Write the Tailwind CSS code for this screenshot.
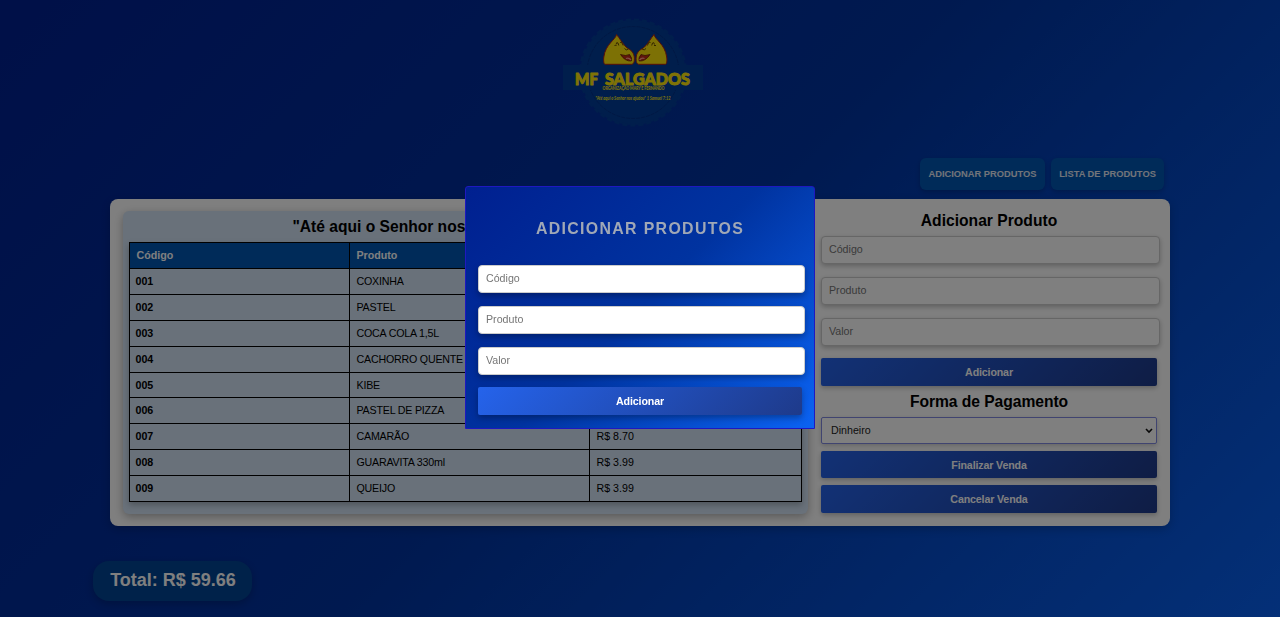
<!DOCTYPE html>
<html lang="pt-BR">
<head>
<meta charset="utf-8">
<title>MF Salgados</title>
<script src="https://cdn.jsdelivr.net/npm/@tailwindcss/browser@4"></script>
</head>
<body class="h-[617px] overflow-hidden font-['Liberation_Sans',Arial,sans-serif] text-[10.67px] text-black">
<div class="flex h-[617px] flex-col bg-[linear-gradient(135deg,#002090_0%,#0033a0_50%,#0860f0_100%)]">
  <header class="flex h-[158px] justify-center pt-[17px] pr-[14px]">
    <svg class="h-[112px] w-[142px]" viewBox="0 0 142 112">
      <g fill="#003c98">
        <circle cx="71" cy="55.500" r="52.500" stroke="#003c98" stroke-width="3" stroke-dasharray="5 3"/>
        <rect x="1" y="48" width="140" height="25"/>
      </g>
      <circle cx="71" cy="55.500" r="46" fill="none" stroke="#003088" stroke-width="1" stroke-dasharray="4 1"/>
      <rect x="5" y="48" width="132" height="25" fill="#003c98"/>
      <g id="salgado">
        <path d="M54.500 17.500C53.500 23 43.500 27 41.800 40C41.400 43 41.600 47.300 43 47.300H69.500C71.500 47.300 72.800 45 72.300 40C71.500 33.500 67 32.500 64 30C60 26 57.500 21 54.500 17.500Z" fill="#fbe30b" stroke="#b01e10" stroke-width="1"/>
        <path d="M54 27.500q.5-3 2-1.500l.8 2.500M58 25.500q1.500-1.500 2.500 1.500l.6 1.500M62.500 31.500q1.500 2.500 4 .5M52.500 29q1-2 2 0" fill="none" stroke="#5a3c00" stroke-width=".9"/>
        <path d="M58.500 37.500Q64 39.500 67.500 37.500Q70.500 41 69.300 44Q63 44.500 58.500 37.500Z" fill="#c02c18" stroke="#5a1000" stroke-width=".7"/>
        <path d="M64 41.500q3-1 5 1.500" stroke="#ff9c8a" stroke-width="1.300" fill="none"/>
      </g>
      <use href="#salgado" transform="translate(146.500 0) scale(-1 1)"/>
      <g fill="#ffe60c" font-family="Lato, sans-serif">
        <g font-size="16.500" font-weight="900" stroke="#ffe60c" stroke-width="1" stroke-linejoin="round">
          <text x="13" y="67.500" textLength="23" lengthAdjust="spacingAndGlyphs">MF</text>
          <text x="43" y="67.500" textLength="85" lengthAdjust="spacingAndGlyphs">SALGADOS</text>
        </g>
        <text x="40.500" y="73.200" font-size="4.800" font-weight="900" textLength="62" lengthAdjust="spacingAndGlyphs">ORGANIZAÇÃO MARY E FERNANDO</text>
        <text x="33.500" y="82.500" font-size="4.800" font-weight="700" font-style="italic" textLength="75" lengthAdjust="spacingAndGlyphs">"Até aqui o Senhor nos ajudou" 1 Samuel 7:12</text>
      </g>
    </svg>
  </header>

  <nav class="mr-[116px] flex h-[41px] justify-end gap-[6px] text-[9.33px] font-bold text-[#e4e9f4]">
    <div class="flex h-8 w-[125px] items-center justify-center rounded-md bg-[#0056b3] pt-px shadow-[0_2px_5px_rgba(0,0,0,.2)]">ADICIONAR PRODUTOS</div>
    <div class="flex h-8 w-[113px] items-center justify-center rounded-md bg-[#0056b3] pt-px shadow-[0_2px_5px_rgba(0,0,0,.2)]">LISTA DE PRODUTOS</div>
  </nav>

  <main class="mx-[110px] flex h-[327px] rounded-lg bg-white pt-3 pl-[13px] shadow-[0_3px_10px_rgba(0,0,0,.2)]">
    <section class="h-[303px] w-[685px] rounded-md bg-[#d2e2f4] px-[6px] shadow-[0_3px_10px_rgba(0,0,0,.3)]">
      <h2 class="h-[31px] pr-[2px] text-center text-[15.600px] leading-[31px] font-bold">"Até aqui o Senhor nos ajudou" 1 Samuel 7:12</h2>
      <table class="w-[673px] table-fixed border-collapse text-left shadow-[0_3px_6px_rgba(0,0,0,.25)] [&_td]:h-[26px] [&_td]:border [&_td]:border-black [&_td]:p-0 [&_td]:pl-[6.500px] [&_td]:leading-[13px] [&_th]:h-[26px] [&_th]:border [&_th]:border-black [&_th]:p-0 [&_th]:pb-px [&_th]:pl-[6.500px] [&_th]:leading-[13px]">
        <colgroup><col class="w-[220px]"><col class="w-[240px]"><col></colgroup>
        <thead><tr class="bg-[#0056b3] text-white"><th>Código</th><th>Produto</th><th>Valor</th></tr></thead>
        <tbody class="[&_td:first-child]:pl-[5.500px] [&_td:first-child]:font-bold [&_td:nth-child(2)]:tracking-[-0.200px]">
          <tr><td>001</td><td>COXINHA</td><td>R$ 6.00</td></tr>
          <tr><td>002</td><td>PASTEL</td><td>R$ 7.00</td></tr>
          <tr><td>003</td><td>COCA COLA 1,5L</td><td>R$ 9.99</td></tr>
          <tr><td>004</td><td>CACHORRO QUENTE</td><td>R$ 6.00</td></tr>
          <tr class="[&_td]:h-[25px]!"><td>005</td><td>KIBE</td><td>R$ 6.00</td></tr>
          <tr><td>006</td><td>PASTEL DE PIZZA</td><td>R$ 7.99</td></tr>
          <tr><td>007</td><td>CAMARÃO</td><td>R$ 8.70</td></tr>
          <tr><td>008</td><td>GUARAVITA 330ml</td><td>R$ 3.99</td></tr>
          <tr><td>009</td><td>QUEIJO</td><td>R$ 3.99</td></tr>
        </tbody>
      </table>
    </section>
    <section class="ml-[13px] flex w-[339px] flex-col">
      <h2 class="mr-[3px] h-[25px] text-center text-[15.650px] leading-[19px] font-bold">Adicionar Produto</h2>
      <div class="flex flex-col gap-[13px] [&>div]:pb-[2px]">
        <div class="flex h-7 items-center rounded border border-[#ccc] bg-white pl-[7px] text-[#757575] shadow-[0_2px_5px_rgba(0,0,0,.25)]">Código</div>
        <div class="flex h-7 items-center rounded border border-[#ccc] bg-white pl-[7px] text-[#757575] shadow-[0_2px_5px_rgba(0,0,0,.25)]">Produto</div>
        <div class="flex h-7 items-center rounded border border-[#ccc] bg-white pl-[7px] text-[#757575] shadow-[0_2px_5px_rgba(0,0,0,.25)]">Valor</div>
      </div>
      <button class="mt-3 h-7 w-[336px] shrink-0 rounded-xs bg-[linear-gradient(135deg,#2563eb,#1e3a8a)] font-bold tracking-[-0.150px] text-white shadow-[0_2px_5px_rgba(0,0,0,.25)]">Adicionar</button>
      <h2 class="mr-[3px] h-[31px] text-center text-[15.650px] leading-[31px] font-bold tracking-[-0.050px]">Forma de Pagamento</h2>
      <div class="flex h-[27px] w-[336px] items-center justify-between rounded-xs border border-[#8088e0] bg-white pr-[3px] pl-[9px] text-[#222] shadow-[0_2px_5px_rgba(0,0,0,.2)]">
        <span class="pb-px">Dinheiro</span>
        <svg class="h-[6px] w-2" viewBox="0 0 8 6"><path d="M1 1l3 3 3-3" fill="none" stroke="#111" stroke-width="1.600"/></svg>
      </div>
      <button class="mt-[7px] h-[27px] w-[336px] shrink-0 rounded-xs bg-[linear-gradient(135deg,#2563eb,#1e3a8a)] font-bold tracking-[-0.150px] text-white shadow-[0_2px_5px_rgba(0,0,0,.25)]">Finalizar Venda</button>
      <button class="mt-[7px] h-7 w-[336px] shrink-0 rounded-xs bg-[linear-gradient(135deg,#2563eb,#1e3a8a)] font-bold tracking-[-0.150px] text-white shadow-[0_2px_5px_rgba(0,0,0,.25)]">Cancelar Venda</button>
    </section>
  </main>

  <footer class="mt-[35px] ml-[93px] flex h-10 w-[159px] items-center justify-center rounded-[16px] bg-[#004494] pb-[2px] pl-px text-[18px] font-bold text-white shadow-[0_3px_8px_rgba(0,0,0,.2)]">Total: R$ 59.66</footer>
</div>

<div class="fixed inset-0 flex justify-center bg-black/50 pt-[186px]">
  <div class="h-[243px] w-[350px] rounded-t-[3px] border border-[#1f18c0] bg-[linear-gradient(135deg,#002090_0%,#0033a0_50%,#0b63f3_100%)] pl-3">
    <h2 class="mr-3 h-[78px] pt-[33px] text-center text-[15.900px] leading-[18px] font-bold tracking-[1.330px] text-[#a0a8b6]">ADICIONAR PRODUTOS</h2>
    <div class="flex w-[327px] flex-col gap-[13px] [&>div]:pb-[2px]">
      <div class="flex h-7 items-center rounded border border-[#ccc] bg-white pl-[7px] text-[#757575] shadow-[0_3px_6px_rgba(0,0,0,.3)]">Código</div>
      <div class="flex h-7 items-center rounded border border-[#ccc] bg-white pl-[7px] text-[#757575] shadow-[0_3px_6px_rgba(0,0,0,.3)]">Produto</div>
      <div class="flex h-7 items-center rounded border border-[#ccc] bg-white pl-[7px] text-[#757575] shadow-[0_3px_6px_rgba(0,0,0,.3)]">Valor</div>
    </div>
    <button class="mt-3 h-7 w-[324px] rounded-xs bg-[linear-gradient(135deg,#2563eb,#1e3a8a)] font-bold tracking-[-0.100px] text-white shadow-[0_3px_6px_rgba(0,0,0,.3)]">Adicionar</button>
  </div>
</div>
</body>
</html>
